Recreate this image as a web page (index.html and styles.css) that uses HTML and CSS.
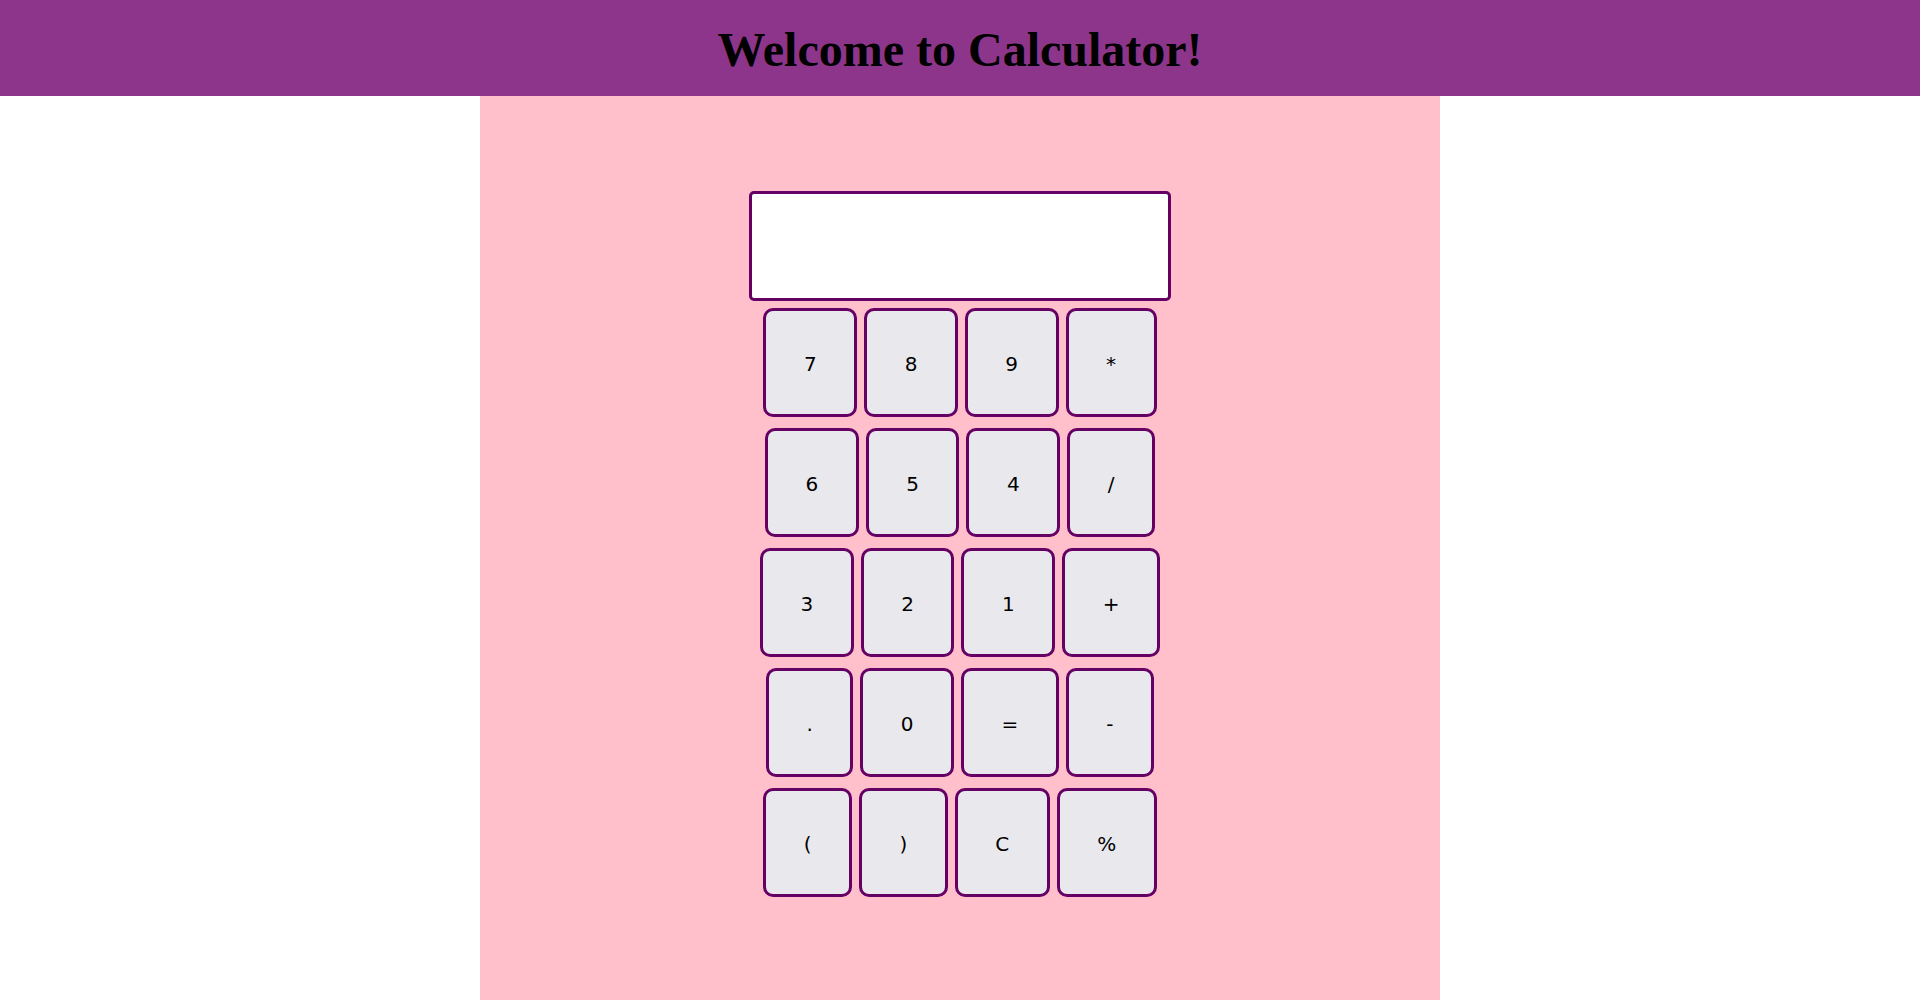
FILE: index.html
```html
<!DOCTYPE html>
<html>
<head>
<meta charset="utf-8">
<title>Calculator</title>
<link rel="stylesheet" href="styles.css">
</head>
<body>
<header class="top">
  <h1 class="title">Welcome to Calculator!</h1>
</header>
<main class="panel">
  <div class="calc">
    <div class="display"></div>
    <div class="row"><button class="key">7</button><button class="key">8</button><button class="key">9</button><button class="key">*</button></div>
    <div class="row"><button class="key">6</button><button class="key">5</button><button class="key">4</button><button class="key">/</button></div>
    <div class="row"><button class="key">3</button><button class="key">2</button><button class="key">1</button><button class="key">+</button></div>
    <div class="row"><button class="key">.</button><button class="key">0</button><button class="key">=</button><button class="key">-</button></div>
    <div class="row"><button class="key">(</button><button class="key">)</button><button class="key">C</button><button class="key">%</button></div>
  </div>
</main>
</body>
</html>
```
FILE: styles.css
```css
html, body {
  margin: 0;
  padding: 0;
}
body {
  background: #ffffff;
  font-family: "Liberation Serif", "Times New Roman", serif;
}
.top {
  height: 96px;
  background: #8c358a;
  display: flex;
  align-items: center;
  justify-content: center;
}
.title {
  margin: 0;
  font-size: 48px;
  font-weight: bold;
  color: #000;
  line-height: 1;
  padding-top: 4px;
}
.panel {
  width: 960px;
  margin: 0 auto;
  background: #ffc0cb;
  min-height: 904px;
  box-sizing: border-box;
  padding-top: 95px;
}
.calc {
  display: flex;
  flex-direction: column;
  align-items: center;
}
.display {
  width: 422px;
  height: 110px;
  box-sizing: border-box;
  background: #fff;
  border: 3px solid #650065;
  border-radius: 5px;
  margin-bottom: 7px;
}
.row {
  display: flex;
  justify-content: center;
  gap: 7px;
  margin-bottom: 11px;
}
.key {
  height: 109px;
  box-sizing: border-box;
  padding: 2px 37.5px 0;
  border: 3px solid #650065;
  border-radius: 10px;
  background: #e9e9ed;
  color: #000;
  font-family: "DejaVu Sans", Verdana, sans-serif;
  font-size: 20px;
  line-height: 1;
}
```
